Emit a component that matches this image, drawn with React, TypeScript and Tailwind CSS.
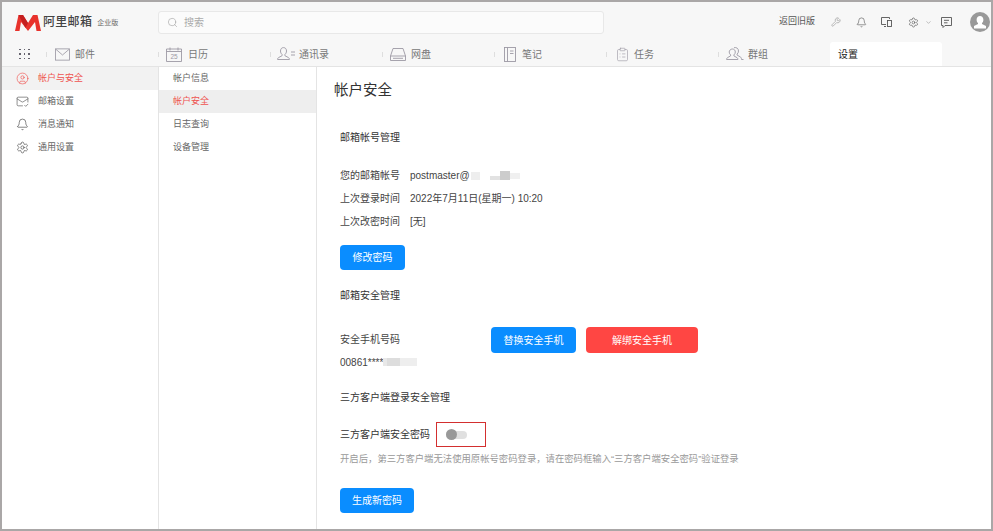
import {
  Bell,
  CircleUser,
  ChevronDown,
  ClipboardList,
  MailCheck,
  Search,
  Settings,
  Wrench,
} from "lucide-react";
import type { ReactNode } from "react";

const ICON = "#9c99a4";

function MailIcon() {
  return (
    <svg width="15" height="13" viewBox="0 0 16 13" fill="none" stroke={ICON} strokeWidth="0.9">
      <rect x="0.5" y="0.5" width="15" height="12" />
      <path d="M1 1l7 6 7-6" />
    </svg>
  );
}

function CalendarIcon() {
  return (
    <svg width="16" height="15" viewBox="0 0 16 15" fill="none" stroke={ICON} strokeWidth="0.9">
      <path d="M0.5 2h15v12.5h-15zM0.5 4.5h15M4 0.5v3M12 0.5v3" />
      <text x="8" y="12" fontSize="6.5" textAnchor="middle" fill={ICON} stroke="none">
        25
      </text>
    </svg>
  );
}

function ContactIcon() {
  return (
    <svg width="18" height="14" viewBox="0 0 18 14" fill="none" stroke={ICON} strokeWidth="0.9">
      <path d="M6.5 0.6c2 0 3 1.5 3 3.4 0 1.500-.7 2.800-1.600 3.500v1.200l3.600 1.900c.6.300.9 1 .9 1.900H0.600c0-.9.300-1.600.9-1.900l3.600-1.900V7.500C4.200 6.800 3.500 5.500 3.500 4c0-1.900 1-3.400 3-3.400z" />
      <path d="M14 5h4M14 8h4" />
    </svg>
  );
}

function DiskIcon() {
  return (
    <svg width="16" height="13" viewBox="0 0 16 13" fill="none" stroke={ICON} strokeWidth="0.9">
      <path d="M3 0.500h10l2.500 7.500v4.500H0.500V8zM0.500 8h15M3 10.300h10" />
    </svg>
  );
}

function NoteIcon() {
  return (
    <svg width="12" height="15" viewBox="0 0 12 15" fill="none" stroke={ICON} strokeWidth="0.9">
      <rect x="0.500" y="0.500" width="11" height="14" />
      <path d="M3.500 0.500v14M6 4h3.500M6 6.500h3.500" />
    </svg>
  );
}

function TeamIcon() {
  return (
    <svg width="18" height="14" viewBox="0 0 18 14" fill="none" stroke={ICON} strokeWidth="0.9">
      <path d="M6.500 2c1.800 0 2.800 1.400 2.800 3 0 1.300-.6 2.300-1.400 2.900v1l3.200 1.800c.5.300.8 1 .8 1.800H0.600c0-.8.300-1.500.8-1.800l3.200-1.800v-1C3.800 7.300 3.200 6.300 3.200 5c0-1.600 1.500-3 3.300-3z" />
      <path d="M8 0.700c2.300-.6 4.500.6 4.500 3.300 0 1.300-.6 2.500-1.400 3.100v1l3.200 1.800c.5.300 1.200 1 1.200 2.600h2" />
    </svg>
  );
}

function AppsIcon() {
  return (
    <div className="grid grid-cols-3 gap-x-[3px] gap-y-[3px]">
      {Array.from({ length: 9 }).map((_, i) => (
        <span key={i} className="h-[1.5px] w-[1.5px] bg-[#66636e]" />
      ))}
    </div>
  );
}

function Logo() {
  return (
    <svg width="26" height="17" viewBox="0 0 26 17">
      <path d="M0 17L3.500 1h4.500l5 8 5-8h4.500L26 17h-4.500l-1.500-9-7 9-7-9-1.500 9z" fill="#e8322c" />
      <path d="M3.500 1h4.500l5 8-2.500 5z" fill="#c41f1f" />
    </svg>
  );
}

const tabs: { label: string; icon: ReactNode; gap: string }[] = [
  { label: "邮件", icon: <MailIcon />, gap: "pl-[9px] gap-[5px]" },
  { label: "日历", icon: <CalendarIcon />, gap: "pl-[8px] gap-[6px]" },
  { label: "通讯录", icon: <ContactIcon />, gap: "pl-[7px] gap-[4px]" },
  { label: "网盘", icon: <DiskIcon />, gap: "pl-[8px] gap-[5px]" },
  { label: "笔记", icon: <NoteIcon />, gap: "pl-[10px] gap-[6px]" },
  {
    label: "任务",
    icon: <ClipboardList size={15} strokeWidth={1} color={ICON} />,
    gap: "pl-[9px] gap-[4px]",
  },
  { label: "群组", icon: <TeamIcon />, gap: "pl-[8px] gap-[4px]" },
];

function Header() {
  return (
    <header className="shrink-0 border-b border-[#e4e4e4] bg-[#f7f7f7]">
      <div className="flex h-[40px] items-center">
        <div className="flex w-[156px] items-center pl-[13px]">
          <Logo />
          <span className="ml-[2px] text-[12px] font-medium leading-none tracking-[0.3px] text-[#444]">阿里邮箱</span>
          <span className="ml-[5px] text-[7px] leading-none text-[#666]">企业版</span>
        </div>
        <div className="flex h-[23px] w-[446px] items-center rounded-[3px] border border-[#e8e8e8] bg-[#fbfbfb] pl-[8px]">
          <Search size={11} strokeWidth={1.2} color="#999" />
          <span className="ml-[6px] text-[10px] text-[#aaa]">搜索</span>
        </div>
        <span className="ml-[175px] text-[9px] text-[#555]">返回旧版</span>
        <Wrench size={10} strokeWidth={1} color="#666" className="ml-[16px]" />
        <Bell size={11} strokeWidth={1.2} color="#444" className="ml-[15px]" />
        <svg width="11" height="10" viewBox="0 0 11 10" fill="none" stroke="#555" strokeWidth="0.9" className="ml-[14px]">
          <path d="M8.500 2V0.500H0.500v7H5M3 9.500h2" />
          <rect x="6.500" y="3.500" width="4" height="6" />
        </svg>
        <Settings size={11} strokeWidth={1.2} color="#444" className="ml-[16px]" />
        <ChevronDown size={7} strokeWidth={1.5} color="#777" className="ml-[6px]" />
        <svg width="11" height="11" viewBox="0 0 11 11" fill="none" stroke="#555" strokeWidth="0.9" className="ml-[9px]">
          <path d="M0.500 0.500h10v8H4l-2 2v-2H0.500zM3 3.300h5M3 5.800h3.500" />
        </svg>
        <div className="ml-[18px] flex h-[20px] w-[20px] items-center justify-center overflow-hidden rounded-full bg-[#999]">
          <svg width="20" height="20" viewBox="0 0 20 20" fill="#fff">
            <path d="M10 4c2 0 3.400 1.500 3.400 3.700 0 1.400-.6 2.600-1.400 3.300v1l4 2v2.500H4V14l4-2v-1c-.8-.7-1.400-1.900-1.400-3.300C6.600 5.500 8 4 10 4z" />
          </svg>
        </div>
      </div>
      <div className="flex h-[24px] items-stretch">
        <div className="flex w-[44px] items-center justify-center pl-[1px]">
          <AppsIcon />
        </div>
        {tabs.map((tab) => (
          <div key={tab.label} className="relative flex w-[112px] items-center">
            <span className="absolute left-0 top-[10px] h-[5px] w-px bg-[#dedede]" />
            <div className={`flex items-center ${tab.gap}`}>
              {tab.icon}
              <span className="text-[10px] text-[#777]">{tab.label}</span>
            </div>
          </div>
        ))}
        <div className="flex w-[112px] items-center rounded-t-[3px] bg-white pl-[8px] text-[10px] text-[#222]">设置</div>
      </div>
    </header>
  );
}

const mainNav: { label: string; icon: ReactNode; active?: boolean }[] = [
  { label: "帐户与安全", icon: <CircleUser size={13} strokeWidth={1.2} color="#ef5350" />, active: true },
  { label: "邮箱设置", icon: <MailCheck size={13} strokeWidth={1.2} color="#555" /> },
  { label: "消息通知", icon: <Bell size={13} strokeWidth={1.2} color="#444" /> },
  { label: "通用设置", icon: <Settings size={13} strokeWidth={1.2} color="#444" /> },
];

const subNav = ["帐户信息", "帐户安全", "日志查询", "设备管理"];

function Blur({ className }: { className: string }) {
  return <span className={`inline-block ${className}`} />;
}

function Heading({ children, className }: { children: ReactNode; className: string }) {
  return <div className={`flex h-[20px] items-center text-[10px] text-[#333] ${className}`}>{children}</div>;
}

function InfoRow({ label, children }: { label: string; children: ReactNode }) {
  return (
    <div className="flex h-[23px] items-center text-[10px] text-[#444]">
      <span className="w-[70px]">{label}</span>
      {children}
    </div>
  );
}

function Btn({ children, className }: { children: ReactNode; className: string }) {
  return (
    <button className={`flex items-center justify-center rounded-[4px] text-[10px] text-white ${className}`}>
      {children}
    </button>
  );
}

export default function App() {
  return (
    <div
      className="flex h-[531px] w-[993px] flex-col overflow-hidden border-2 border-[#aaa7a7] bg-white"
      style={{ fontFamily: '"Liberation Sans", "Noto Sans CJK SC", sans-serif' }}
    >
      <Header />
      <div className="flex min-h-0 flex-1">
        <aside className="w-[157px] shrink-0 border-r border-[#e4e4e4]">
          {mainNav.map((item) => (
            <div
              key={item.label}
              className={`flex h-[23px] items-center gap-[9px] pl-[14px] text-[9px] ${
                item.active ? "bg-[#f2f2f2] text-[#ef5350]" : "text-[#666]"
              }`}
            >
              {item.icon}
              <span>{item.label}</span>
            </div>
          ))}
        </aside>
        <aside className="w-[158px] shrink-0 border-r border-[#e4e4e4]">
          {subNav.map((label, i) => (
            <div
              key={label}
              className={`flex h-[23px] items-center pl-[14px] text-[9px] ${
                i === 1 ? "bg-[#eeeeee] text-[#ef5350]" : "text-[#666]"
              }`}
            >
              {label}
            </div>
          ))}
        </aside>
        <main className="flex-1 pl-[23px]">
          <h1 className="mt-[13px] -ml-[6px] flex h-[22px] items-center text-[14.5px] font-normal text-[#333]">帐户安全</h1>
          <Heading className="mt-[25px]">邮箱帐号管理</Heading>
          <div className="mt-[17px]">
            <InfoRow label="您的邮箱帐号">
              <span>postmaster@</span>
              <Blur className="ml-[1px] h-[8px] w-[9px] bg-[#eeeeee]" />
              <Blur className="ml-[10px] mt-[4px] h-[4px] w-[10px] bg-[#e2e2e2]" />
              <Blur className="h-[9px] w-[10px] bg-[#cccccc]" />
              <Blur className="h-[6px] w-[10px] bg-[#f0f0f0]" />
            </InfoRow>
            <InfoRow label="上次登录时间">
              <span>2022年7月11日(星期一) 10:20</span>
            </InfoRow>
            <InfoRow label="上次改密时间">
              <span>[无]</span>
            </InfoRow>
          </div>
          <Btn className="mt-[12px] h-[25px] w-[65px] bg-[#0a8dff]">修改密码</Btn>
          <Heading className="mt-[15px]">邮箱安全管理</Heading>
          <div className="mt-[22px] flex items-start">
            <div className="w-[151px] text-[10px] text-[#444]">
              <div className="flex h-[24px] items-center">安全手机号码</div>
              <div className="flex h-[22px] items-center">
                <span>00861****</span>
                <Blur className="h-[8px] w-[4px] bg-[#e8e8e8]" />
                <Blur className="h-[8px] w-[13px] bg-[#dddddd]" />
                <Blur className="h-[8px] w-[17px] bg-[#eeeeee]" />
              </div>
            </div>
            <Btn className="h-[26px] w-[85px] bg-[#0a8dff]">替换安全手机</Btn>
            <Btn className="ml-[10px] h-[26px] w-[112px] bg-[#ff4643]">解绑安全手机</Btn>
          </div>
          <Heading className="mt-[14px]">三方客户端登录安全管理</Heading>
          <div className="mt-[15px] flex h-[25px] items-center text-[10px] text-[#333]">
            <span className="w-[96px]">三方客户端安全密码</span>
            <div className="flex h-[25px] w-[50px] items-center border border-[#d32f2f] pl-[9px]">
              <div className="flex h-[8px] w-[21px] items-center rounded-full bg-[#e0e0e0]">
                <span className="h-[11px] w-[11px] rounded-full bg-[#999]" />
              </div>
            </div>
          </div>
          <p className="mt-[3px] flex h-[18px] items-center text-[9.35px] text-[#999]">
            开启后，第三方客户端无法使用原帐号密码登录，请在密码框输入“三方客户端安全密码”验证登录
          </p>
          <Btn className="mt-[20px] h-[25px] w-[74px] bg-[#0a8dff]">生成新密码</Btn>
        </main>
      </div>
    </div>
  );
}
